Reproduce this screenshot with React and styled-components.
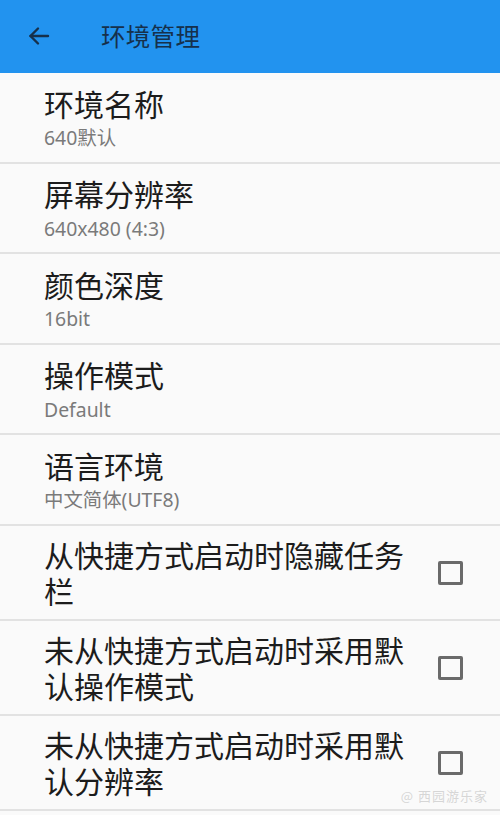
import React from "react";
import styled, { createGlobalStyle } from "styled-components";

const Global = createGlobalStyle`
  html, body { margin: 0; padding: 0; background: #fafafa; overflow: hidden; }
  body { font-family: "Noto Sans", "Noto Sans CJK SC", sans-serif; }
  * { box-sizing: border-box; }
`;

const Screen = styled.div`
  width: 500px;
  height: 815px;
  position: relative;
  background: #fafafa;
  display: flex;
  flex-direction: column;
  overflow: hidden;
`;

const AppBar = styled.header`
  height: 73px;
  flex: none;
  background: #2293ef;
  display: flex;
  align-items: center;
  padding-left: 26px;
  gap: 49px;
  color: #16304b;
`;

const BackButton = styled.div`
  width: 26px;
  height: 26px;
  display: flex;
  align-items: center;
  justify-content: center;
  margin-top: -2px;
`;

const Title = styled.h1`
  margin: 0;
  font-size: 24.5px;
  font-weight: 400;
  font-family: "Noto Sans CJK SC", sans-serif;
  letter-spacing: 0.3px;
  margin-top: -2px;
`;

const List = styled.div`
  display: flex;
  flex-direction: column;
`;

const Row = styled.div`
  min-height: ${(p) => (p.$check ? "95px" : "90.5px")};
  display: flex;
  align-items: center;
  padding: 0 37px 0 44px;
  border-bottom: 2px solid #e2e2e2;
  gap: 16px;
`;

const Texts = styled.div`
  flex: 1;
  display: flex;
  flex-direction: column;
`;

const Primary = styled.div`
  font-family: "Noto Sans CJK SC", sans-serif;
  font-size: 30px;
  line-height: ${(p) => (p.$multi ? "36px" : "38px")};
  color: #1c1c1c;
`;

const Secondary = styled.div`
  font-family: "Noto Sans", "Noto Sans CJK SC", sans-serif;
  font-size: 19.4px;
  line-height: 27px;
  margin-top: 2.5px;
  color: #7a7a7a;
`;

const Box = styled.div`
  width: 25px;
  height: 24px;
  border: 3px solid #6a6a6a;
  border-radius: 2px;
  flex: none;
  margin-top: 2px;
`;

const Watermark = styled.div`
  position: absolute;
  right: 12px;
  bottom: 10px;
  font-family: "Noto Sans CJK SC", sans-serif;
  font-size: 13px;
  color: rgba(205, 205, 205, 0.8);
  letter-spacing: 1px;
`;

const items = [
  { t: "环境名称", s: "640默认" },
  { t: "屏幕分辨率", s: "640x480 (4:3)" },
  { t: "颜色深度", s: "16bit" },
  { t: "操作模式", s: "Default" },
  { t: "语言环境", s: "中文简体(UTF8)" },
  { t: "从快捷方式启动时隐藏任务栏", c: true },
  { t: "未从快捷方式启动时采用默认操作模式", c: true },
  { t: "未从快捷方式启动时采用默认分辨率", c: true },
];

export default function App() {
  return (
    <>
      <Global />
      <Screen>
        <AppBar>
          <BackButton>
            <svg width="24" height="24" viewBox="0 0 24 24" fill="none" stroke="#16304b" strokeWidth="2.4" strokeLinecap="round" strokeLinejoin="round">
              <path d="M21 12H3.5" />
              <path d="M11 4.5L3.5 12L11 19.5" />
            </svg>
          </BackButton>
          <Title>环境管理</Title>
        </AppBar>
        <List>
          {items.map((it) => (
            <Row key={it.t} $check={it.c}>
              <Texts>
                <Primary $multi={it.c}>{it.t}</Primary>
                {it.s && <Secondary>{it.s}</Secondary>}
              </Texts>
              {it.c && <Box />}
            </Row>
          ))}
        </List>
        <Watermark>@ 西园游乐家</Watermark>
      </Screen>
    </>
  );
}
